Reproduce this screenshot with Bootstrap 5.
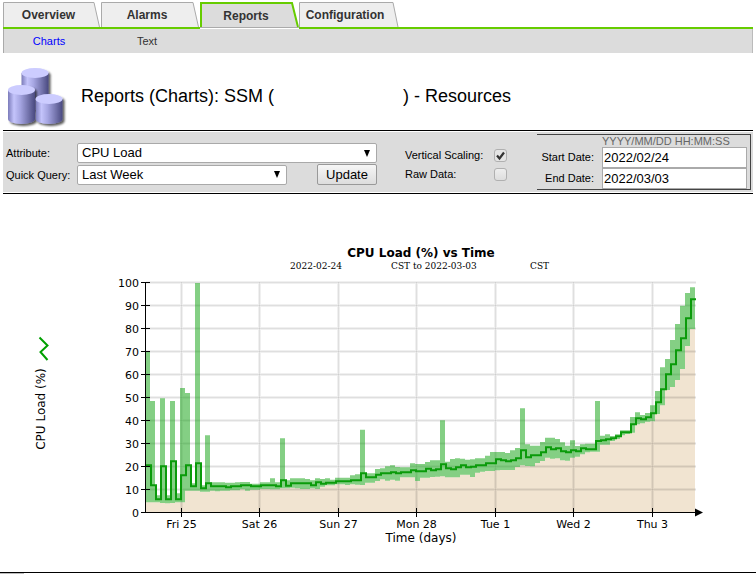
<!DOCTYPE html>
<html lang="en">
<head>
<meta charset="utf-8">
<meta name="viewport" content="width=device-width, initial-scale=1">
<title>Reports (Charts)</title>
<link href="https://cdn.jsdelivr.net/npm/bootstrap@5.3.0/dist/css/bootstrap.min.css" rel="stylesheet">
<style>
  body { font-family: "Liberation Sans", Arial, sans-serif; font-size: 11px; line-height: 14px; color: #000; background: #fff; }
  .page-head { padding: 2px 3px 0; }
  .tabs { height: 27px; padding: 0; border-bottom: 2px solid #6c0; }
  .tab { width: 99px; height: 27px; padding: 5px 7px 0 0; font-size: 12px; line-height: 16px; font-weight: bold; color: #333; text-decoration: none; text-align: center; isolation: isolate; }
  .tab:first-child { width: 98px; }
  .tab svg { z-index: -1; }
  .tab.current { padding-top: 6px; }
  .subtabs { height: 24px; background: #dcdcdc; border-left: 1px solid #aaa; border-right: 1px solid #bbb; }
  .subtabs a { width: 98px; padding-right: 8px; color: #333; text-align: center; text-decoration: none; }
  .subtabs a.here { color: #00f; }
  .title-row { height: 77px; padding: 11px 6px 0; gap: 14px; }
  .title-row h1 { padding-top: 21px; font-size: 18px; line-height: 22px; font-weight: normal; }
  .hidden-host { width: 129px; }
  .query { margin: 0 3px; border-top: 1px solid #000; border-bottom: 1px solid #000; padding: 1px 0; }
  .query-inner { background: #dcdcdc; height: 60px; padding: 2px 2px 2px 3px; }
  .pick { display: grid; grid-template-columns: 71px 300px; row-gap: 1px; padding-top: 9px; align-items: center; }
  .pick select { appearance: none; height: 20px; padding: 0 20px 0 4px; font-size: 13px; line-height: 18px; color: #000; border: 1px solid #a9a9a9; border-radius: 2px;
    background: #fff url("data:image/svg+xml,%3Csvg xmlns='http://www.w3.org/2000/svg' width='6' height='7'%3E%3Cpath d='M0 0h6L3 7z'/%3E%3C/svg%3E") no-repeat right 6px center; }
  .quick { width: 210px; }
  .update { width: 60px; height: 21px; padding: 0; font-size: 13px; line-height: 19px; color: #000; border: 1px solid #999; border-radius: 2px; background: linear-gradient(#f6f6f6, #ddd); }
  .toggles { display: grid; grid-template-columns: 89px 13px; row-gap: 4px; padding: 13px 2px 0 0; align-content: start; align-items: center; }
  .toggles input { appearance: none; width: 13px; height: 13px; margin: 2px 0 0; border: 1px solid #b0b0b0; border-radius: 3px; background: linear-gradient(#eee, #ddd); }
  .toggles input:checked { background: #e4e4e4 url("data:image/svg+xml,%3Csvg xmlns='http://www.w3.org/2000/svg' width='11' height='11'%3E%3Cpath d='M2 5.5l2.5 3L9 2.5' fill='none' stroke='%23333' stroke-width='2.2'/%3E%3C/svg%3E") center no-repeat; }
  .dates { display: grid; grid-template-columns: 57px 145px; column-gap: 8px; padding: 0 3px 0 0; border: 1px solid #444; border-left: 0; align-items: center; height: 56px; grid-template-rows: 12px 21px 21px; }
  .dates label { padding-bottom: 2px; text-align: right; }
  .dates input { height: 21px; width: 145px; padding: 0 1px; font-size: 13px; border: 1px solid #aaa; color: #000; background: #fff; }
  .format { color: #666; line-height: 12px; grid-column: 2; white-space: nowrap; }
  .chart { font-family: "DejaVu Sans", sans-serif; font-size: 11px; width: 100%; height: auto; }
  .chart .axis-name { font-size: 12px; }
  .chart .heading { font-size: 12px; font-weight: bold; }
  .chart .range { font-family: "DejaVu Serif", serif; font-size: 9px; }
  .foot { border-top: 1px solid #000; }
  .foot span { width: 24px; height: 1px; background: #bbb; }
</style>
<script src="https://cdn.jsdelivr.net/npm/bootstrap@5.3.0/dist/js/bootstrap.bundle.min.js" defer></script>
</head>
<body>
<header class="page-head">
  <nav class="tabs d-flex" aria-label="Sections">
    <a class="tab position-relative" href="#"><svg class="position-absolute top-0 start-0" width="99" height="25"><path d="M.5 25V.5H91L96.500 25" fill="#eee" stroke="#aaa"/></svg>Overview</a>
    <a class="tab position-relative" href="#"><svg class="position-absolute top-0 start-0" width="99" height="25"><path d="M.5 25V.5H92L97.500 25" fill="#eee" stroke="#aaa"/></svg>Alarms</a>
    <a class="tab current position-relative" href="#" aria-current="page"><svg class="position-absolute top-0 start-0" width="99" height="27"><path d="M0 26.500H99" stroke="#fff"/><path d="M0 25V0H92L98 25z" fill="#dcdcdc"/><path d="M0 25.500H99" stroke="#aaa"/><path d="M0 1H92L98 25" fill="none" stroke="#6c0" stroke-width="2"/><path d="M1 0V25" stroke="#6c0" stroke-width="2"/></svg>Reports</a>
    <a class="tab position-relative" href="#"><svg class="position-absolute top-0 start-0" width="100" height="25"><path d="M.5 25V.5H94L99 25" fill="#eee" stroke="#aaa"/></svg>Configuration</a>
  </nav>
  <nav class="subtabs d-flex align-items-center" aria-label="Report type">
    <a class="here" href="#">Charts</a>
    <a href="#">Text</a>
  </nav>
</header>

<div class="title-row d-flex">
  <svg width="61" height="65" viewBox="6 65 61 65" aria-hidden="true">
    <defs>
      <linearGradient id="side"><stop offset="0" stop-color="#7b7bba"/><stop offset=".22" stop-color="#c4c4fb"/><stop offset=".45" stop-color="#a6a6e2"/><stop offset="1" stop-color="#4a4a80"/></linearGradient>
      <filter id="shade" x="-20%" y="-20%" width="150%" height="150%"><feDropShadow dx="2" dy="2" stdDeviation="1.300" flood-color="#000" flood-opacity=".65"/></filter>
    </defs>
    <g filter="url(#shade)">
      <path d="M21.500 74V106A13.500 5 0 0 0 48.500 106V74z" fill="url(#side)"/><ellipse cx="35" cy="74" rx="13.500" ry="5" fill="#ccf"/>
    </g>
    <g filter="url(#shade)">
      <path d="M8 91V120A13.500 5 0 0 0 35 120V91z" fill="url(#side)"/><ellipse cx="21.500" cy="91" rx="13.500" ry="5" fill="#ccf"/>
    </g>
    <g filter="url(#shade)">
      <path d="M35.500 100V120A13.500 5 0 0 0 62.500 120V100z" fill="url(#side)"/><ellipse cx="49" cy="100" rx="13.500" ry="5" fill="#ccf"/>
    </g>
  </svg>
  <h1 class="d-flex mb-0"><span>Reports (Charts): SSM (</span><span class="hidden-host"></span><span>) - Resources</span></h1>
</div>

<form class="query">
  <div class="query-inner d-flex">
    <div class="pick align-self-start">
      <label for="attr">Attribute:</label>
      <select id="attr"><option>CPU Load</option></select>
      <label for="quick">Quick Query:</label>
      <div class="d-flex justify-content-between align-items-center">
        <select id="quick" class="quick"><option>Last Week</option></select>
        <button type="button" class="update">Update</button>
      </div>
    </div>
    <div class="toggles mx-auto">
      <label for="vscale">Vertical Scaling:</label><input id="vscale" type="checkbox" checked>
      <label for="raw">Raw Data:</label><input id="raw" type="checkbox">
    </div>
    <div class="dates">
      <span class="format">YYYY/MM/DD HH:MM:SS</span>
      <label for="from">Start Date:</label><input id="from" type="text" value="2022/02/24">
      <label for="to">End Date:</label><input id="to" type="text" value="2022/03/03">
    </div>
  </div>
</form>

<main>
  <svg class="chart d-block" viewBox="0 194 756 378" role="img" aria-label="CPU Load (%) vs Time">
    <g text-anchor="middle">
      <text class="heading" x="421" y="257">CPU Load (%) vs Time</text>
      <text class="axis-name" x="421" y="542">Time (days)</text>
      <text class="axis-name" transform="translate(45 409) rotate(-90)">CPU Load (%)</text>
    </g>
    <g class="range"><text x="290" y="269">2022-02-24</text><text x="391" y="269">CST to 2022-03-03</text><text x="530" y="269">CST</text></g>
    <path d="M39.500 337.500L47.500 345.500L40.500 352L47.500 360" fill="none" stroke="#00a000" stroke-width="2"/>
    <path id="ground" fill="#f1e4d1"/>
    <path id="grid" stroke="#000" stroke-opacity=".06" stroke-width="3" fill="none"/>
    <path id="grid-core" stroke="#000" stroke-opacity=".07" fill="none"/>
    <path id="band" fill="#0a9f0a" fill-opacity=".5"/>
    <path id="mean" fill="none" stroke="#0a9b0a" stroke-width="2"/>
    <path id="axes" stroke="#000" fill="none"/>
    <path d="M695 508.500L703 512.500L695 516.500z"/>
    <g id="y-labels" text-anchor="end"></g>
    <g id="x-labels" text-anchor="middle"></g>
  </svg>
</main>
<footer class="foot"><span class="d-block"></span></footer>

<script>
  // Samples are levels below y = 390, three units to one chart unit.
  const mean = [226,286,328,229,328,214,328,256,226,289,220,295,280,289,289,289,292,289,289,286,286,289,289,286,286,286,289,271,287,280,280,280,280,286,277,281,278,278,274,274,274,271,271,250,262,262,254,250,250,247,250,247,247,241,244,244,236,241,238,223,235,238,232,226,232,230,226,226,220,220,208,211,214,211,205,181,202,196,196,187,172,178,175,184,187,181,184,175,178,178,153,151,148,145,139,127,127,103,85,88,82,70,37,-2,-47,-77,-119,-155,-215,-272];
  const high = [-114,33,316,25,316,33,310,-6,9,280,-321,286,136,277,277,277,278,278,277,276,276,281,281,277,277,265,277,145,271,265,265,265,267,271,265,267,265,269,263,263,263,256,253,119,250,250,237,235,229,226,231,232,232,220,222,222,216,211,211,91,215,207,205,206,209,208,205,205,197,186,186,186,189,181,174,55,163,167,167,156,143,143,147,157,167,151,168,163,161,161,33,137,133,138,133,121,121,81,67,75,69,46,3,-68,-93,-150,-198,-253,-291,-308];
  const low = [337,337,337,339,340,339,337,337,302,302,302,305,305,302,304,302,302,301,301,298,302,299,299,297,297,298,298,295,295,293,295,297,297,295,297,290,286,286,283,283,285,283,284,285,278,278,273,268,272,269,272,262,262,262,273,263,263,261,260,259,262,262,262,254,254,261,248,245,243,243,241,240,240,240,231,226,228,229,219,213,203,206,205,211,212,203,200,193,187,185,185,164,164,153,147,136,132,128,103,100,95,94,72,46,0,-9,-30,-63,-132,-183];
  const left = 145, step = 5, right = left + mean.length * step;
  const y = v => (390 + v / 3).toFixed(1);
  const stairs = a => a.map(v => `V${y(v)}h${step}`).join('');
  const put = (id, d) => document.getElementById(id).setAttribute('d', d);
  put('ground', `M${left} 512${stairs(low)}V512z`);
  put('band', high.map((v, i) => `M${left + i * step} ${y(v)}h${step}V${y(low[i])}h-${step}z`).join(''));
  put('mean', `M${left + 1} ${y(mean[0])}h5` + stairs(mean.slice(1)));
  const days = [[181.5,'Fri 25'],[259.5,'Sat 26'],[338.5,'Sun 27'],[416.5,'Mon 28'],[495.5,'Tue 1'],[573.5,'Wed 2'],[652.5,'Thu 3']];
  let grid = '', axes = `M145.5 282V512.500M145 512.500H${right}`, yl = '', xl = '';
  for (let p = 0; p <= 100; p += 10) {
    const gy = 512.5 - p * 2.3;
    if (p) grid += `M${left + 1} ${gy}H${right + 1}`;
    axes += p ? `M141 ${gy}H150` : `M141 ${gy}H146`;
    yl += `<text x="139" y="${gy + 4}">${p}</text>`;
  }
  for (const [x, name] of days) {
    grid += `M${x} 282V512`;
    axes += `M${x} 508V517`;
    xl += `<text x="${x}" y="528">${name}</text>`;
  }
  put('grid', grid); put('grid-core', grid); put('axes', axes);
  document.getElementById('y-labels').innerHTML = yl;
  document.getElementById('x-labels').innerHTML = xl;
</script>
</body>
</html>
